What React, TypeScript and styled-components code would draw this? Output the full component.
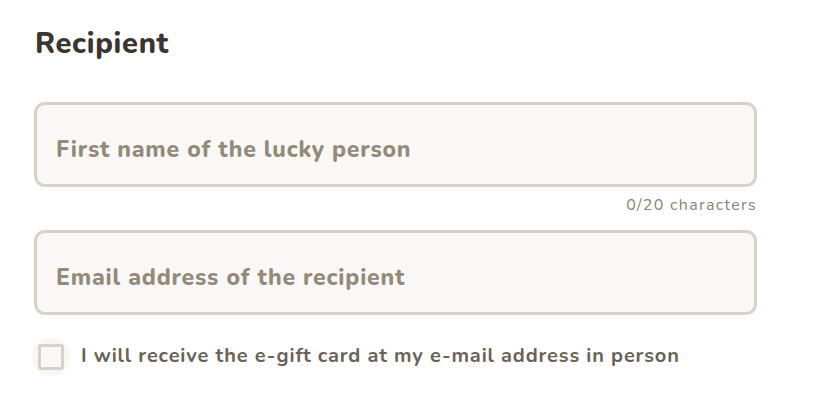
import { FC } from "react"
import styled, { createGlobalStyle } from 'styled-components';

const GlobalStyle = createGlobalStyle`
    body {
        margin: 0;
        background: #fff;
        font-family: Nunito, "Open Sans", "Noto Sans", sans-serif;
    }
`

type TFieldProps = {
    placeholder: string
}

const Field: FC<TFieldProps> = ({ placeholder }) => {
    return (
        <FieldBox>
            <FieldInput placeholder={placeholder} />
        </FieldBox>
    )
}

const App: FC = () => {
    return (
        <>
            <GlobalStyle />
            <Section>
                <Title>Recipient</Title>
                <FieldGroup>
                    <Field placeholder="First name of the lucky person" />
                    <Counter>0/20 characters</Counter>
                </FieldGroup>
                <Field placeholder="Email address of the recipient" />
                <CheckRow>
                    <CheckHalo>
                        <CheckBox type="checkbox" />
                    </CheckHalo>
                    <CheckLabel>I will receive the e-gift card at my e-mail address in person</CheckLabel>
                </CheckRow>
            </Section>
        </>
    )
}

export default App

const Section = styled.div`
    width: 723px;
    padding: 26px 0 0 34px;
    display: flex;
    flex-direction: column;
`

const Title = styled.h2`
    margin: 0 0 40px 1px;
    font-size: 29px;
    line-height: 36px;
    font-weight: 800;
    letter-spacing: 0.7px;
    color: #3a352f;
`

const FieldGroup = styled.div`
    display: flex;
    flex-direction: column;
    margin-bottom: 15px;
`

const FieldBox = styled.div`
    height: 85px;
    box-sizing: border-box;
    border: 3px solid #d6d2c9;
    border-radius: 11px;
    background: #faf8f6;
    display: flex;
    align-items: center;
    padding: 10px 19px 0;
`

const FieldInput = styled.input`
    width: 100%;
    border: none;
    outline: none;
    background: transparent;
    font-family: inherit;
    font-size: 23px;
    font-weight: 800;
    letter-spacing: 0.8px;
    color: #3a352f;
    padding: 0;
    &::placeholder {
        color: #948a7a;
        opacity: 1;
    }
`

const Counter = styled.div`
    align-self: flex-end;
    margin-top: 8px;
    font-size: 16px;
    line-height: 20px;
    letter-spacing: 1.3px;
    color: #8b8375;
`

const CheckRow = styled.div`
    display: flex;
    align-items: center;
    gap: 11px;
    margin-top: 23px;
`

const CheckHalo = styled.div`
    width: 38px;
    height: 38px;
    margin-left: -2px;
    border-radius: 50%;
    background: #f9f7f4;
    display: flex;
    align-items: center;
    justify-content: center;
`

const CheckBox = styled.input`
    appearance: none;
    margin: 0;
    width: 26px;
    height: 26px;
    box-sizing: border-box;
    border: 3px solid #d6d2c9;
    border-radius: 3px;
    background: #faf8f6;
`

const CheckLabel = styled.label`
    padding-bottom: 3px;
    font-size: 20px;
    font-weight: 700;
    letter-spacing: 0.85px;
    color: #6a6257;
`
